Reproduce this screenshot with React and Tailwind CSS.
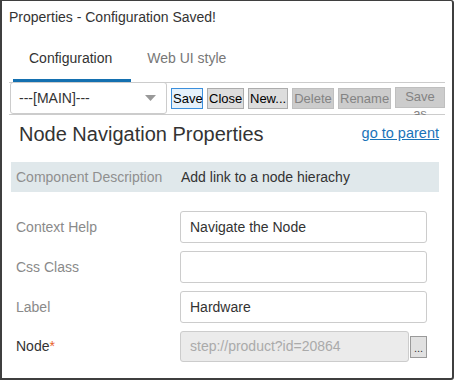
const fields = [
  { label: 'Context Help', value: 'Navigate the Node' },
  { label: 'Css Class', value: '' },
  { label: 'Label', value: 'Hardware' },
];

const ToolButton = ({ children, variant = 'normal', className = '' }) => {
  const styles = {
    primary: 'bg-[#e5f1fb] border-[#3b8fdc] text-black',
    normal: 'bg-[#dddddd] border-[#acacac] text-black',
    disabled: 'bg-[#cccccc] border-[#bfbfbf] text-[#838383]',
  };
  return (
    <button
      className={`h-[21px] border px-[1px] text-[13px] leading-[15px] ${styles[variant]} ${className}`}
    >
      {children}
    </button>
  );
};

export default function App() {
  return (
    <div
      className="w-[454px] h-[380px] bg-white border-2 border-t border-[#3f3f3f] rounded-r-[3px] flex flex-col text-[#333]"
      style={{ fontFamily: "'Liberation Sans', Arial, sans-serif" }}
    >
      {/* Title */}
      <div className="h-[33px] pl-[7px] text-[14px] leading-[33px] text-[#333]">
        Properties - Configuration Saved!
      </div>

      {/* Tabs */}
      <div className="flex ml-[11px] h-[48px]">
        <div className="pl-4 pr-[19px] pt-[14px] text-[14px] leading-[20px] border-b-[3px] border-[#1470b0] text-[#333]">
          Configuration
        </div>
        <div className="px-4 pt-[14px] text-[14px] leading-[20px] text-[#777]">
          Web UI style
        </div>
      </div>

      {/* Toolbar */}
      <div className="mx-[7px] h-[33px] border-y border-[#cccccc] flex items-center">
        <div className="ml-[1px] w-[158px] h-[32px] -mt-[1px] border border-[#cccccc] rounded-[3px] flex items-center justify-between pl-[8px] pr-[10px] text-[14px] text-[#333]">
          <span>---[MAIN]---</span>
          <svg width="11" height="6" viewBox="0 0 11 6">
            <polygon points="0,0 11,0 5.5,6" fill="#999" />
          </svg>
        </div>
        <div className="flex items-center gap-[4px] ml-[4px] -mt-[1px]">
          <ToolButton variant="primary" className="w-[32px]">Save</ToolButton>
          <ToolButton className="w-[37px]">Close</ToolButton>
          <ToolButton className="w-[40px]">New...</ToolButton>
          <ToolButton variant="disabled" className="w-[42px]">Delete</ToolButton>
          <ToolButton variant="disabled" className="w-[53px]">Rename</ToolButton>
          <button className="w-[50px] h-[21px] border border-[#bfbfbf] bg-[#cccccc] text-[#838383] text-[13px] leading-[17px] flex flex-col items-center justify-start px-[7px] -mt-[1px]">
            Save as
          </button>
        </div>
      </div>

      {/* Heading */}
      <div className="relative bg-white h-[38px] flex items-center justify-between pl-[17px] pr-[13px]">
        <h1 className="text-[20px] text-[#333]">Node Navigation Properties</h1>
        <a href="#" className="text-[14.5px] text-[#1a73b8] underline">go to parent</a>
      </div>

      {/* Component description */}
      <div className="mt-[9px] ml-[9px] mr-[13px] h-[30px] bg-[#e0e8eb] flex items-center text-[14px]">
        <div className="w-[170px] pl-[5px] text-[#8f8f8f]">Component Description</div>
        <div className="text-[#333]">Add link to a node hierachy</div>
      </div>

      {/* Fields */}
      <div className="mt-[19px] ml-[14px] mr-[25px] flex flex-col gap-[8px]">
        {fields.map((f) => (
          <div key={f.label} className="flex items-center h-[32px]">
            <div className="w-[164px] text-[14px] text-[#8a8a8a]">{f.label}</div>
            <div className="flex-1 h-[32px] border border-[#cccccc] rounded-[3px] pl-[9px] flex items-center text-[14px] text-[#333]">
              {f.value}
            </div>
          </div>
        ))}
        <div className="flex items-center h-[31px]">
          <div className="w-[164px] text-[14px] text-[#333]">
            Node<span className="text-[#e8632b]">*</span>
          </div>
          <div className="flex-1 h-[31px] border border-[#cccccc] bg-[#ebebeb] rounded-[3px] pl-[9px] flex items-center text-[14px] text-[#aaaaaa]">
            step://product?id=20864
          </div>
          <button className="ml-[1px] w-[17px] h-[22px] border border-[#9a9a9a] bg-[#e1e1e1] text-[11px] leading-none flex items-end justify-center pb-[3px] text-[#333]">
            ...
          </button>
        </div>
      </div>
    </div>
  );
}
